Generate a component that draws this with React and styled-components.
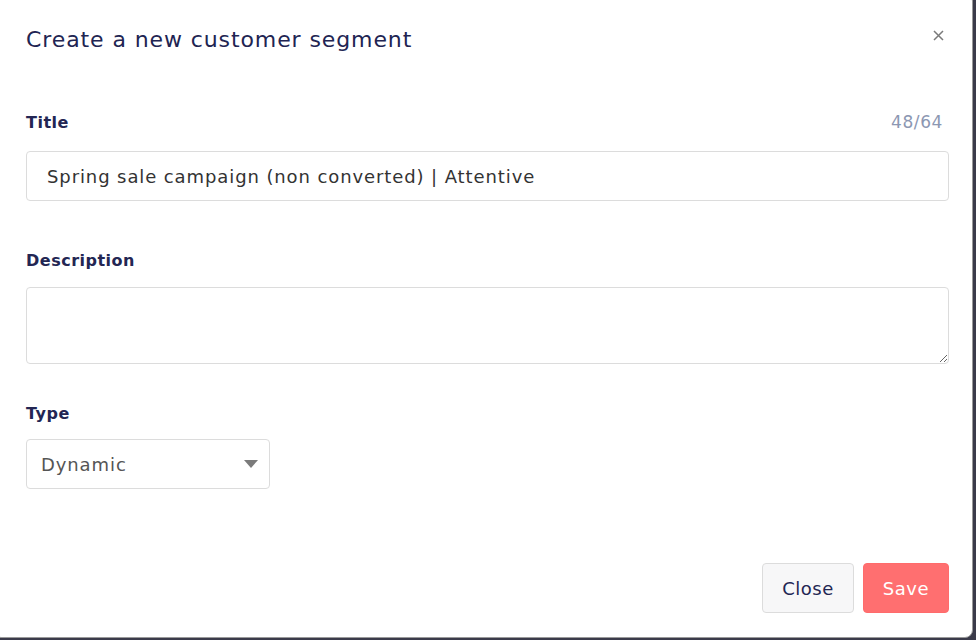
import React, { useState } from "react";
import styled, { createGlobalStyle } from "styled-components";

// Modal for creating a customer segment
const GlobalStyle = createGlobalStyle`
  html, body {
    margin: 0;
    padding: 0;
    background: #3b3b4a;
    overflow: hidden;
  }
  * {
    box-sizing: border-box;
  }
`;

const Page = styled.div`
  width: 976px;
  height: 640px;
  display: flex;
  align-items: flex-start;
  justify-content: flex-start;
  font-family: "DejaVu Sans", "Noto Sans", sans-serif;
`;

const Modal = styled.div`
  width: 980px;
  height: 645px;
  margin: -7px 0 0 -7px;
  background: #ffffff;
  border: 1px solid #9a9a9a;
  border-radius: 8px;
  display: flex;
  flex-direction: column;
  padding: 7px 0 0 7px;
`;

const Header = styled.div`
  display: flex;
  justify-content: space-between;
  align-items: flex-start;
  padding: 26px 28px 0 25px;
  height: 111px;

  & h2 {
    margin: 0;
    font-size: 22px;
    font-weight: 500;
    color: #212452;
    letter-spacing: 0.9px;
  }
`;

const CloseX = styled.button`
  border: none;
  background: none;
  padding: 0;
  margin-top: 3px;
  width: 11px;
  height: 11px;
  display: flex;
  cursor: pointer;
`;

const Body = styled.div`
  padding: 0 23px 0 25px;
  display: flex;
  flex-direction: column;
  flex: 1;
`;

const LabelRow = styled.div`
  display: flex;
  justify-content: space-between;
  align-items: baseline;
  margin-bottom: ${(p) => p.gap || 19}px;

  & label {
    font-size: 16px;
    font-weight: 600;
    color: #232653;
    letter-spacing: 0.5px;
  }
  & span {
    font-size: 17px;
    color: #8c97b2;
    margin-right: 6px;
    letter-spacing: 0.6px;
  }
`;

const TextInput = styled.input`
  width: 100%;
  height: 50px;
  border: 1.5px solid #dcdcdc;
  border-radius: 4px;
  padding: 0 20px;
  font-family: inherit;
  font-size: 18px;
  letter-spacing: 0.9px;
  color: #333;
  outline: none;
  caret-color: #000;
`;

const TextArea = styled.textarea`
  width: 100%;
  height: 77px;
  border: 1.5px solid #dcdcdc;
  border-radius: 4px;
  padding: 10px 20px;
  font-family: inherit;
  font-size: 17px;
  resize: vertical;
  outline: none;
`;

const Field = styled.div`
  display: flex;
  flex-direction: column;
  margin-bottom: ${(p) => p.space}px;
`;

const SelectBox = styled.div`
  width: 244px;
  height: 50px;
  border: 1.5px solid #dcdcdc;
  border-radius: 4px;
  display: flex;
  align-items: center;
  justify-content: space-between;
  padding: 0 11px 0 14px;
  font-size: 18px;
  letter-spacing: 0.9px;
  color: #555;
`;

const Footer = styled.div`
  display: flex;
  justify-content: flex-end;
  gap: 9px;
  padding: 0 23px 0 25px;
  margin-top: auto;
  margin-bottom: 24px;
`;

const Button = styled.button`
  height: 50px;
  padding: 0 ${(p) => (p.primary ? 19 : 19)}px;
  border-radius: 4px;
  font-family: inherit;
  font-size: 18px;
  letter-spacing: 0.5px;
  font-weight: 500;
  border: 1.5px solid ${(p) => (p.primary ? "#ff6b6b" : "#dcdcdc")};
  background: ${(p) => (p.primary ? "#ff6f70" : "#f7f7f8")};
  color: ${(p) => (p.primary ? "#ffffff" : "#232653")};
  cursor: pointer;
`;

const App = () => {
  const [title, setTitle] = useState("Spring sale campaign (non converted) | Attentive");

  return (
    <Page>
      <GlobalStyle />
      <Modal>
        <Header>
          <h2>Create a new customer segment</h2>
          <CloseX aria-label="close">
            <svg width="11" height="11" viewBox="0 0 11 11">
              <path d="M1 1L10 10M10 1L1 10" stroke="#7a7a7a" strokeWidth="1.5" />
            </svg>
          </CloseX>
        </Header>
        <Body>
          <LabelRow>
            <label>Title</label>
            <span>{title.length}/64</span>
          </LabelRow>
          <Field space={50}>
            <TextInput value={title} onChange={(e) => setTitle(e.target.value)} />
          </Field>
          <LabelRow gap={17}>
            <label>Description</label>
          </LabelRow>
          <Field space={40}>
            <TextArea />
          </Field>
          <LabelRow gap={16}>
            <label>Type</label>
          </LabelRow>
          <Field space={0}>
            <SelectBox>
              <span>Dynamic</span>
              <svg width="14" height="8" viewBox="0 0 14 8">
                <path d="M0 0H14L7 8Z" fill="#7b7b7b" />
              </svg>
            </SelectBox>
          </Field>
        </Body>
        <Footer>
          <Button>Close</Button>
          <Button primary>Save</Button>
        </Footer>
      </Modal>
    </Page>
  );
};

export default App;
